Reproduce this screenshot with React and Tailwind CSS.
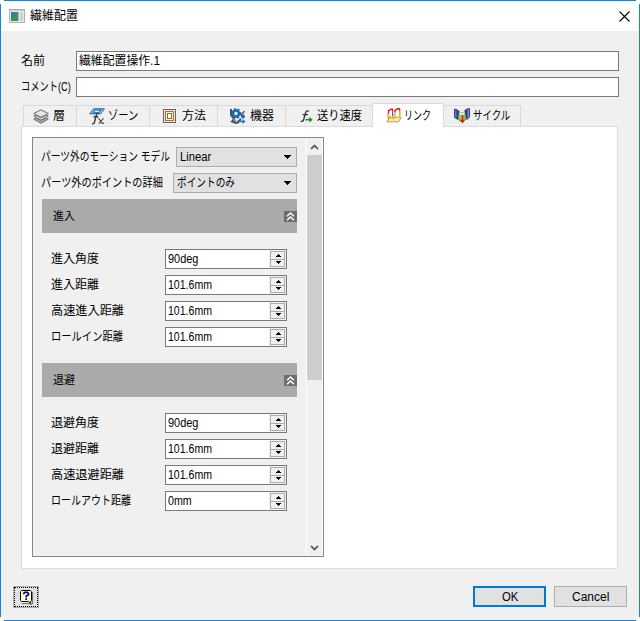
import { useLayoutEffect, useRef } from "react";

const entryFields = [
  { label: "進入角度", w: 48, value: "90deg", vw: 30 },
  { label: "進入距離", w: 48, value: "101.6mm", vw: 44 },
  { label: "高速進入距離", w: 73, value: "101.6mm", vw: 44 },
  { label: "ロールイン距離", w: 72, value: "101.6mm", vw: 44 },
];

const exitFields = [
  { label: "退避角度", w: 48, value: "90deg", vw: 30 },
  { label: "退避距離", w: 48, value: "101.6mm", vw: 44 },
  { label: "高速退避距離", w: 73, value: "101.6mm", vw: 44 },
  { label: "ロールアウト距離", w: 80, value: "0mm", vw: 24 },
];

// Text condensed to a given width, like the narrow kana of the system UI font
const Text = ({ w, className = "", children }) => {
  const ref = useRef(null);

  useLayoutEffect(() => {
    const el = ref.current;
    el.style.transform = `scaleX(${w / el.offsetWidth})`;
  }, [w, children]);

  return (
    <span className={`block shrink-0 ${className}`} style={{ width: w }}>
      <span ref={ref} className="inline-block origin-left whitespace-pre align-top">
        {children}
      </span>
    </span>
  );
};

const AppIcon = () => (
  <svg width="16" height="14" viewBox="0 0 16 14">
    <rect x=".5" y=".5" width="15" height="13" fill="#e8ecee" stroke="#a9afb2" />
    <rect x="2" y="3" width="7" height="9" fill="#3a8f63" />
    <path d="M2 3h4L2 9z" fill="#3f74a8" />
    <path d="M9 3v9" stroke="#6b7c84" />
    <rect x="11" y="3" width="3" height="9" fill="#c5d0d6" />
    <path d="M1 1.5h14" stroke="#c4c9cb" />
  </svg>
);

const LayersIcon = () => (
  <svg width="16" height="15" viewBox="0 0 16 15">
    <path d="M.7 10.2 8 14.2l7.3-4L13 9 8 11.5 3 9z" fill="#a7adb2" stroke="#6b7075" />
    <path d="M.7 7.2 8 11.2l7.3-4L13 6 8 8.5 3 6z" fill="#c8cdd1" stroke="#6b7075" />
    <path d="M.7 4.5 8 .8l7.3 3.7L8 8.3z" fill="#e2e5e8" stroke="#6b7075" />
  </svg>
);

const ZoneIcon = () => (
  <svg width="16" height="17" viewBox="0 0 16 17">
    <path d="M4.5.8h10.8l-3.5 5H.8z" fill="#b9dcf8" stroke="#4c5660" />
    <path d="M6 2h6l-2 2.8H4z" fill="#fff" stroke="#1388ec" strokeWidth="1.4" />
    <path d="M9.5 5.5c-1.5-.4-2 .7-2.3 2L5.5 14c-.3 1.5-1 2-2.4 1.6M4.5 8.7h4.8" fill="none" stroke="#363b40" strokeWidth="1.4" />
    <path d="M9.3 10.5c2 0 2.2 5 4.2 5 .7 0 1-.3 1.3-1M14.8 10.5c-2 0-3.2 5-5.3 5" fill="none" stroke="#363b40" strokeWidth="1.2" />
  </svg>
);

const MethodIcon = () => (
  <svg width="13" height="14" viewBox="0 0 13 14">
    <rect x=".5" y=".5" width="12" height="13" fill="#f6f7f8" stroke="#5d6772" />
    <rect x="2.5" y="2.5" width="8" height="9" fill="#fff" stroke="#f0501e" strokeWidth="1.2" />
    <rect x="4.5" y="4.5" width="4" height="5" fill="#fff" stroke="#3a9a1c" />
  </svg>
);

const MachineIcon = () => (
  <svg width="16" height="16" viewBox="0 0 16 16">
    <path d="M1 1v6l3 4-2 2.5 4 1.5 3-1M8 14l3-3" fill="none" stroke="#4c4f52" strokeWidth="2" />
    <circle cx="6" cy="5.5" r="3" fill="#fff" stroke="#1768b8" strokeWidth="2.6" />
    <circle cx="6" cy="5.5" r="4.6" fill="none" stroke="#1768b8" strokeWidth="1.6" strokeDasharray="2 1.8" />
    <path d="M11 7.5 14.5 3" stroke="#55595d" strokeWidth="1.5" />
    <circle cx="13" cy="8.5" r="2" fill="#1768b8" />
    <path d="M3 11l3 2.5" stroke="#888" strokeWidth="2" />
    <path d="M9 13.5h4" stroke="#1675d1" strokeWidth="1.3" />
    <path d="M12.5 11v5l3-2.5z" fill="#1675d1" />
  </svg>
);

const FeedIcon = () => (
  <svg width="13" height="13" viewBox="0 0 13 13">
    <path d="M9 1.3C7.2.3 6 1.2 5.5 3L3.7 9.5C3.3 11 2.3 11.7.8 11.2M2.6 4.7h5.4" fill="none" stroke="#2f3337" strokeWidth="1.3" />
    <path d="M5.5 9.7h5" stroke="#149414" strokeWidth="1.5" />
    <path d="M9.3 6.8v5.8l3.4-2.9z" fill="#149414" />
  </svg>
);

const LinkIcon = () => (
  <svg width="16" height="15" viewBox="0 0 16 15">
    <path d="M.8 13.8 4 9.3h11.2l-2.7 4.5z" fill="#fbe9b4" stroke="#c9983a" />
    <path d="M2.2 11V5M13.8 8.5V2" stroke="#eda51c" strokeWidth="1.5" />
    <path d="M2.5 5.5V3L5 1.2h1.5V3" fill="none" stroke="#ed1c24" strokeWidth="1.5" />
    <path d="M9 4.5V2.5l2.5-1.7h2V2.5" fill="none" stroke="#ed1c24" strokeWidth="1.5" />
    <path d="M6.7 3v5.5" stroke="#3659dc" strokeWidth="1.2" />
    <path d="M9 4.5V9L6.5 11M4 11V8" fill="none" stroke="#eda51c" strokeWidth="1.3" />
  </svg>
);

const CycleIcon = () => (
  <svg width="16" height="16" viewBox="0 0 16 16">
    <path d="M.6 1 3 1.8v9L.6 9.5z" fill="#6681d6" stroke="#273780" />
    <path d="M3 1.5 5.5 3v7.5L3 12z" fill="#39415e" />
    <path d="M10.5 2 13 1v10l-2.5-1z" fill="#39415e" />
    <path d="M13 1l2.4-.4V9L13 11.5z" fill="#7e99e6" stroke="#273780" />
    <ellipse cx="8" cy="9" rx="3.7" ry="4.5" fill="#93cf56" stroke="#688d43" />
    <path d="M5 4.5h6L10 7H6z" fill="#d6e7ef" />
    <path d="M8.5 7v6" stroke="#e31919" strokeWidth="1.5" />
    <path d="M6 11.7h5L8.5 15.5z" fill="#e31919" />
  </svg>
);

const CloseIcon = () => (
  <svg width="11" height="11" viewBox="0 0 11 11">
    <path d="M.5.5l10 10M10.5.5l-10 10" stroke="#000" strokeWidth="1.1" />
  </svg>
);

const HelpIcon = () => (
  <svg width="15" height="16" viewBox="0 0 15 16">
    <path d="M3 14.5h7l2 1.2v-1.2h1.5V3" fill="none" stroke="#777" strokeWidth="1.2" />
    <path d="M2.5 1.5h9l1 1v9l-1 1V14l-2-1.5h-7l-1-1v-9z" fill="#fffff0" stroke="#000" />
    <path d="M3.5 2.5v9M10.5 2.5v9" stroke="#ff3" strokeDasharray="1 1" />
    <path d="M4.8 5.2V4.3l1-.9h2.6l1 .9v1.4L7.2 7.3V8.5M7.2 9.3V11" fill="none" stroke="#00008b" strokeWidth="1.7" />
  </svg>
);

const Caret = () => (
  <svg width="8" height="4" viewBox="0 0 8 4" shapeRendering="crispEdges">
    <path d="M0 0h8L4 4z" fill="#000" />
  </svg>
);

const TextRow = ({ label, w, value }) => (
  <div className="flex h-5 items-center">
    <div className="w-[55px] shrink-0">
      <Text w={w}>{label}</Text>
    </div>
    <div className="flex h-5 w-[543px] items-center border border-[#7a7a7a] bg-white pl-0.5">
      {value && <Text w={81}>{value}</Text>}
    </div>
  </div>
);

const Tab = ({ icon, label, w, className }) => (
  <div className={`flex shrink-0 items-center border-[#d9d9d9] ${className}`}>
    {icon}
    <Text w={w}>{label}</Text>
  </div>
);

const Combo = ({ label, w, value, vw, className }) => (
  <div className="flex h-5 items-center justify-between">
    <Text w={w}>{label}</Text>
    <div className={`flex h-5 items-center justify-between border border-[#adadad] bg-[#e1e1e1] pr-[5px] pl-[3px] ${className}`}>
      <Text w={vw}>{value}</Text>
      <Caret />
    </div>
  </div>
);

const Spinner = ({ value, vw }) => (
  <div className="flex h-5 w-[122px] items-center justify-between border border-[#7a7a7a] bg-white pl-0.5">
    <Text w={vw}>{value}</Text>
    <div className="flex h-[18px] w-[17px] flex-col bg-[#f0f0f0] p-px">
      <div className="flex h-[9px] items-center justify-center border border-[#adadad] bg-[#f0f0f0]">
        <svg width="6" height="3" viewBox="0 0 6 3" shapeRendering="crispEdges">
          <path d="M0 3 3 0l3 3z" fill="#000" />
        </svg>
      </div>
      <div className="-mt-px flex h-[9px] items-center justify-center border border-[#adadad] bg-[#f0f0f0]">
        <svg width="6" height="3" viewBox="0 0 6 3" shapeRendering="crispEdges">
          <path d="M0 0h6L3 3z" fill="#000" />
        </svg>
      </div>
    </div>
  </div>
);

const Section = ({ title, fields }) => (
  <div>
    <div className="flex h-[34px] items-center justify-between bg-[#aaaaaa] pl-[11px] text-[11px]">
      <Text w={22}>{title}</Text>
      <div className="flex h-[11px] w-[13px] items-center justify-center bg-[#6e6e6e]">
        <svg width="9" height="9" viewBox="0 0 9 9">
          <path d="M1 4.3 4.5 1 8 4.3M1 8.3 4.5 5 8 8.3" fill="none" stroke="#fff" strokeWidth="1.4" />
        </svg>
      </div>
    </div>
    <div className="flex flex-col gap-1.5 pt-4 pr-2.5 pb-4 pl-[9px]">
      {fields.map((field) => (
        <div key={field.label} className="flex h-5 items-center justify-between">
          <Text w={field.w}>{field.label}</Text>
          <Spinner value={field.value} vw={field.vw} />
        </div>
      ))}
    </div>
  </div>
);

const ScrollBar = () => (
  <div className="flex w-[17px] shrink-0 flex-col items-center border-r border-l border-white bg-[#f0f0f0]">
    <div className="flex h-[17px] items-center justify-center">
      <svg width="9" height="6" viewBox="0 0 9 6">
        <path d="M1 5l3.5-3.5L8 5" fill="none" stroke="#606060" strokeWidth="1.8" />
      </svg>
    </div>
    <div className="h-[225px] w-[15px] bg-[#cdcdcd]" />
    <div className="grow" />
    <div className="flex h-[17px] items-center justify-center">
      <svg width="9" height="6" viewBox="0 0 9 6">
        <path d="M1 1l3.5 3.5L8 1" fill="none" stroke="#606060" strokeWidth="1.8" />
      </svg>
    </div>
  </div>
);

const App = () => {
  return (
    <div className="relative flex h-[621px] w-[640px] flex-col border border-[#1883d7] bg-[#f0f0f0] font-['Liberation_Sans','Noto_Sans_CJK_JP',sans-serif] text-xs leading-[18px] text-black">
      {/* the frame stops short of the corners */}
      <div className="absolute -top-px -left-px size-1 bg-white" />
      <div className="absolute -top-px -right-px size-1 bg-white" />
      <div className="absolute -bottom-px -left-px size-1 rounded-tr-full bg-white" />
      <div className="absolute -right-px -bottom-px size-1 rounded-tl-full bg-white" />

      <div className="flex h-[30px] shrink-0 items-center bg-white pr-[9px] pl-2">
        <AppIcon />
        <div className="ml-[5px] grow">
          <Text w={48}>繊維配置</Text>
        </div>
        <CloseIcon />
      </div>

      <div className="flex flex-col gap-1.5 pt-5 pl-5">
        <TextRow label="名前" w={24} value="繊維配置操作.1" />
        <TextRow label="コメント(C)" w={50} />
      </div>

      {/* tabs */}
      <div className="mt-1.5 flex h-[23px] shrink-0 items-end pl-[22px]">
        <Tab icon={<LayersIcon />} label="層" w={12} className="h-[21px] w-[53px] gap-1 border-t border-l pl-[9px]" />
        <Tab icon={<ZoneIcon />} label="ゾーン" w={30} className="h-[21px] w-[73px] gap-[3px] border-t border-l pl-3" />
        <Tab icon={<MethodIcon />} label="方法" w={24} className="h-[21px] w-[68px] gap-1.5 border-t border-l pl-[13px]" />
        <Tab icon={<MachineIcon />} label="機器" w={24} className="h-[21px] w-[68px] gap-1 border-t border-l pl-3" />
        <Tab icon={<FeedIcon />} label="送り速度" w={45} className="h-[21px] w-[87px] gap-1 border-t border-l pl-[14px]" />
        <Tab icon={<LinkIcon />} label="リンク" w={27} className="z-10 -mb-px h-6 w-[72px] gap-0.5 border-t border-r border-l bg-white pl-[13px]" />
        <Tab icon={<CycleIcon />} label="サイクル" w={37} className="h-[21px] w-[77px] gap-[3px] border-t border-r pl-2.5" />
      </div>

      <div className="ml-5 h-[443px] w-[597px] shrink-0 border border-[#dcdcdc] bg-white pt-2.5 pl-2.5">
        <div className="flex h-[420px] w-[292px] border border-[#828790] bg-[#f0f0f0]">
          <div className="grow pt-[9px] pr-[9px]">
            <div className="flex flex-col gap-1.5 pb-1.5 pl-2">
              <Combo label="パーツ外のモーション モデル" w={129} value="Linear" vw={31} className="w-[121px]" />
              <Combo label="パーツ外のポイントの詳細" w={122} value="ポイントのみ" vw={58} className="w-[124px]" />
            </div>
            <div className="pl-[9px]">
              <Section title="進入" fields={entryFields} />
              <Section title="退避" fields={exitFields} />
            </div>
          </div>
          <ScrollBar />
        </div>
      </div>

      <div className="flex justify-between pt-[17px] pr-3 pl-3">
        <div className="flex h-[22px] w-[26px] border border-[#adadad] bg-[#e1e1e1]">
          <div className="flex grow items-center justify-center border border-dotted border-black">
            <HelpIcon />
          </div>
        </div>
        <div className="flex gap-2">
          <div className="flex h-[21px] w-[73px] items-center justify-center border-2 border-[#0078d7] bg-[#e1e1e1]">
            <Text w={16}>OK</Text>
          </div>
          <div className="flex h-[21px] w-[73px] items-center justify-center border border-[#adadad] bg-[#e1e1e1]">
            <Text w={37}>Cancel</Text>
          </div>
        </div>
      </div>
    </div>
  );
};

export default App;
